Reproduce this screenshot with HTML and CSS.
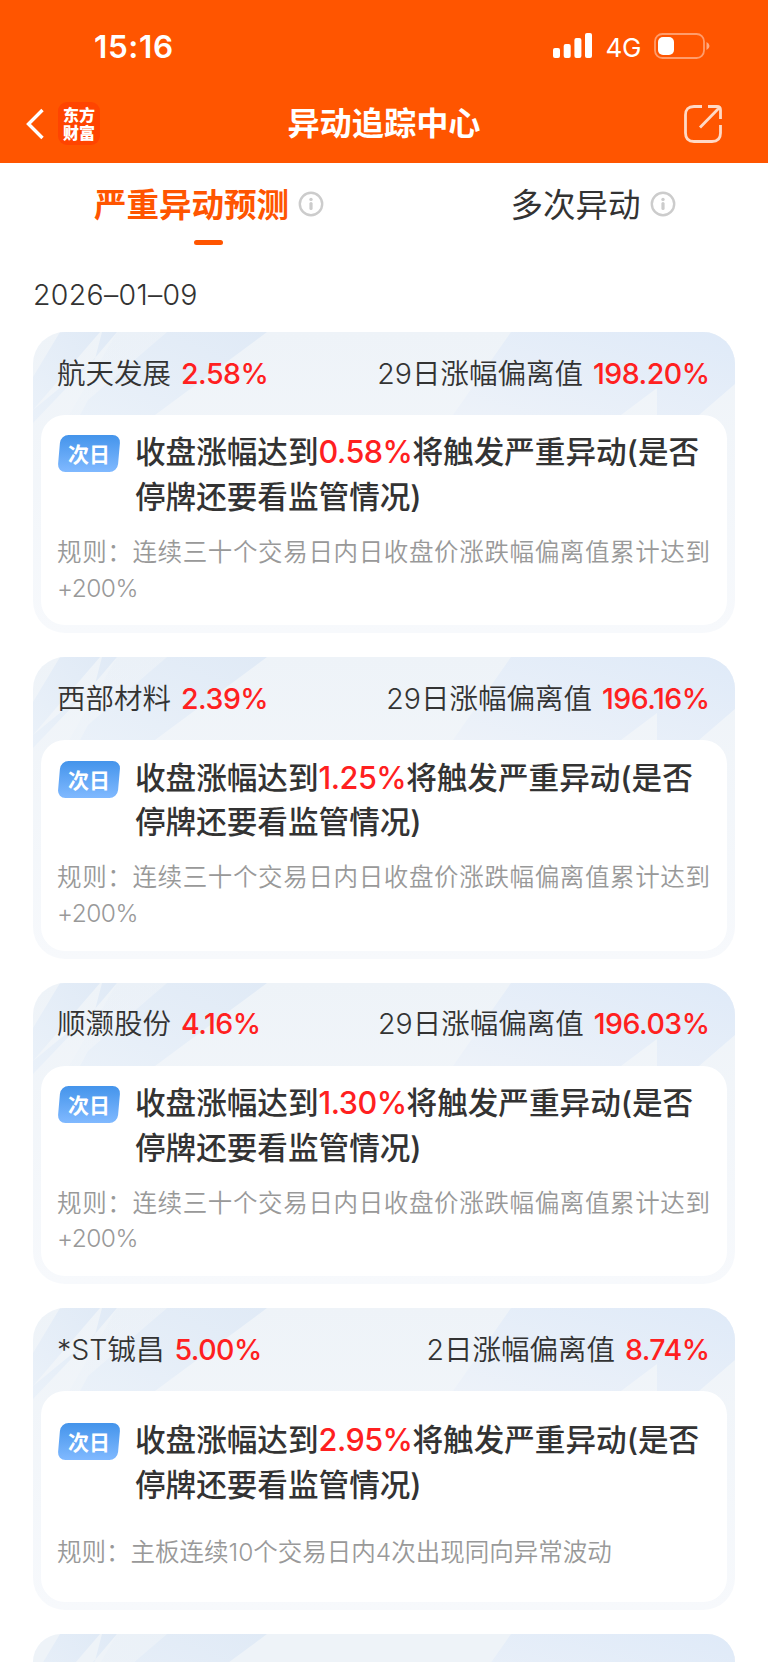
FILE: index.html
```html
<!DOCTYPE html>
<html lang="zh-CN">
<head>
<meta charset="utf-8">
<title>异动追踪中心</title>
<link rel="stylesheet" href="styles.css">
</head>
<body>
<svg class="defs" width="0" height="0" aria-hidden="true">
  <defs>
    <linearGradient id="ray" x1="1" y1="0" x2="0" y2="1"><stop offset="0" stop-color="#e0eaf6"/><stop offset="1" stop-color="#eaf1f9"/></linearGradient>
    <linearGradient id="rayRight" x1="1" y1="0" x2="0" y2="1"><stop offset="0" stop-color="#dfeaf8"/><stop offset="1" stop-color="#edf2f9"/></linearGradient>
    <symbol id="rays" viewBox="0 0 702 110">
      <path fill="url(#ray)" d="M27 0H67L0 78V45Z"/>
      <path fill="url(#ray)" d="M69 0H84L61 27L0 91V78L62 27Z"/>
      <path fill="url(#ray)" d="M84 0H134L47 83H36Z" opacity=".25"/>
      <path fill="url(#ray)" d="M134 0H234L122 83H47L55 68Z"/>
      <path fill="url(#rayRight)" d="M478 0H702V52L666 83H624V56L588 83H420Z"/>
    </symbol>
    <symbol id="info" viewBox="0 0 26 26">
      <circle cx="13" cy="13" r="11.2" fill="none" stroke="#ccc" stroke-width="2.4"/>
      <circle cx="13" cy="8.4" r="1.7" fill="#ccc"/>
      <path d="M13 12.5V17.5" stroke="#ccc" stroke-width="3.2" stroke-linecap="round"/>
    </symbol>
  </defs>
</svg>
<header class="top">
  <div class="status">
    <span class="time">15:16</span>
    <div class="signals">
      <svg width="40" height="26" viewBox="0 0 40 26" fill="#fff"><rect x="0" y="15" width="7" height="10" rx="2"/><rect x="10.7" y="11" width="7" height="14" rx="2"/><rect x="21.4" y="5" width="7" height="20" rx="2"/><rect x="32" y="0" width="7" height="25" rx="2"/></svg>
      <span class="net">4G</span>
      <svg width="56" height="26" viewBox="0 0 56 26"><rect x="1" y="1" width="49" height="24" rx="7.5" fill="none" stroke="#fff" stroke-opacity=".42" stroke-width="1.8"/><rect x="4" y="4" width="16" height="18" rx="5" fill="#fff"/><path d="M52.5 9V17Q55.5 15.5 55.5 13T52.5 9Z" fill="#fff" fill-opacity=".5"/></svg>
    </div>
  </div>
  <nav class="nav">
    <div class="nav-left">
      <svg width="18" height="32" viewBox="0 0 18 32"><path d="M16.5 2L2.5 16L16.5 30" fill="none" stroke="#fff" stroke-width="3.4"/></svg>
      <span class="logo">东方<br>财富</span>
    </div>
    <h1 class="title">异动追踪中心</h1>
    <svg class="share" width="40" height="40" viewBox="0 0 40 40" fill="none" stroke="#ffd9c5" stroke-width="2.8"><path d="M19 2.5H11Q2.5 2.5 2.5 11V29Q2.5 37.5 11 37.5H29Q37.5 37.5 37.5 29V21M25 2.5H34Q37.5 2.5 37.5 6V15M36.5 3.5L17 23.5"/></svg>
  </nav>
</header>
<div class="tabs">
  <div class="tab active"><span class="tab-label">严重异动预测</span><svg class="info"><use href="#info"/></svg></div>
  <div class="tab"><span class="tab-label">多次异动</span><svg class="info"><use href="#info"/></svg></div>
</div>
<main class="list">
  <p class="date">2026–01–09</p>
  <article class="card">
    <svg class="rays"><use href="#rays"/></svg>
    <div class="head"><span>航天发展 <b class="num">2.58%</b></span><span>29日涨幅偏离值 <b class="num">198.20%</b></span></div>
    <div class="body">
      <div class="msg"><span class="tag"><i>次日</i></span><p class="text">收盘涨幅达到<b class="num">0.58%</b>将触发严重异动(是否停牌还要看监管情况)</p></div>
      <p class="rule">规则：连续三十个交易日内日收盘价涨跌幅偏离值累计达到<span class="limit">+200%</span></p>
    </div>
  </article>
  <article class="card">
    <svg class="rays"><use href="#rays"/></svg>
    <div class="head"><span>西部材料 <b class="num">2.39%</b></span><span>29日涨幅偏离值 <b class="num">196.16%</b></span></div>
    <div class="body">
      <div class="msg"><span class="tag"><i>次日</i></span><p class="text">收盘涨幅达到<b class="num">1.25%</b>将触发严重异动(是否停牌还要看监管情况)</p></div>
      <p class="rule">规则：连续三十个交易日内日收盘价涨跌幅偏离值累计达到<span class="limit">+200%</span></p>
    </div>
  </article>
  <article class="card">
    <svg class="rays"><use href="#rays"/></svg>
    <div class="head"><span>顺灏股份 <b class="num">4.16%</b></span><span>29日涨幅偏离值 <b class="num">196.03%</b></span></div>
    <div class="body">
      <div class="msg"><span class="tag"><i>次日</i></span><p class="text">收盘涨幅达到<b class="num">1.30%</b>将触发严重异动(是否停牌还要看监管情况)</p></div>
      <p class="rule">规则：连续三十个交易日内日收盘价涨跌幅偏离值累计达到<span class="limit">+200%</span></p>
    </div>
  </article>
  <article class="card">
    <svg class="rays"><use href="#rays"/></svg>
    <div class="head"><span>*ST铖昌 <b class="num">5.00%</b></span><span>2日涨幅偏离值 <b class="num">8.74%</b></span></div>
    <div class="body">
      <div class="msg"><span class="tag"><i>次日</i></span><p class="text">收盘涨幅达到<b class="num">2.95%</b>将触发严重异动(是否停牌还要看监管情况)</p></div>
      <p class="rule">规则：主板连续10个交易日内4次出现同向异常波动</p>
    </div>
  </article>
  <article class="card next">
    <svg class="rays"><use href="#rays"/></svg>
  </article>
</main>
</body>
</html>
```

FILE: styles.css
```css
* { box-sizing: border-box; margin: 0; padding: 0; }
html, body { height: 1662px; overflow: hidden; }
body { background: #fff; color: #333; font-family: Inter, "Noto Sans CJK SC", sans-serif; display: flex; flex-direction: column; }
.defs { position: absolute; }
.top { flex: none; height: 163px; background: #ff5500; color: #fff; }
.status { height: 92px; padding: 0 58px 0 94px; display: flex; justify-content: space-between; align-items: center; }
.time { font-size: 31.5px; font-weight: 600; letter-spacing: 0.6px; }
.signals { display: flex; align-items: center; }
.net { font-size: 26px; margin: 3px 13px 0 13px; letter-spacing: -0.4px; }
.nav { height: 63px; padding: 0 45px 0 26px; display: flex; align-items: center; justify-content: space-between; position: relative; }
.nav-left { display: flex; align-items: center; gap: 14px; }
.logo { width: 42px; height: 43px; border-radius: 9px; background: #ff4400; font: 900 16px/18px "Noto Sans CJK SC", sans-serif; text-align: center; padding-top: 3px; }
.title { position: absolute; left: 0; right: 0; text-align: center; font-size: 32.2px; line-height: 48px; font-weight: 600; pointer-events: none; }
.tabs { flex: none; height: 92px; display: grid; grid-template-columns: 418px 350px; }
.tab { display: flex; justify-content: center; align-items: center; gap: 9px; height: 82px; font-size: 32.5px; position: relative; }
.tab-label { padding-bottom: 3px; }
.tab.active { color: #ff5500; font-weight: 600; }
.tab.active::after { content: ""; position: absolute; left: 194px; top: 77px; width: 29px; height: 5px; border-radius: 2.5px; background: #ff5500; }
.info { width: 26px; height: 26px; }
.list { flex: 1; min-height: 0; overflow: hidden; padding: 0 33px; }
.date { height: 77px; line-height: 80px; font-size: 28.5px; font-weight: 350; letter-spacing: 0.3px; }
.card { position: relative; height: 301.4px; margin-bottom: 24px; padding: 0 8px 8px; border-radius: 32px; overflow: hidden; background: linear-gradient(#eef3f8, #f7f9fc); display: flex; flex-direction: column; }
.card.next { height: 28px; margin: 0; padding: 0; border-radius: 32px 32px 0 0; background: #eef3f8; }
.rays { position: absolute; left: 0; top: 0; width: 702px; height: 110px; }
.head { position: relative; height: 83px; padding: 0 17.5px 5px 16px; display: flex; justify-content: space-between; align-items: center; font-size: 28.5px; font-weight: 350; white-space: nowrap; }
.num { color: #ff2020; font-weight: 500; letter-spacing: -0.5px; }
.head .num { margin-left: 2px; font-weight: 450; }
.body { position: relative; flex: 1; border-radius: 24px; background: #fff; padding: 0 17px 4px 16px; display: flex; flex-direction: column; justify-content: space-evenly; }
.msg { display: flex; }
.tag { flex: none; width: 60px; height: 37px; margin: 5px 16px 0 2px; border-radius: 8px; background: linear-gradient(#4494eb, #80b9ff); transform: skewX(-5deg); color: #fff; display: flex; align-items: center; justify-content: center; }
.tag i { font: 700 21px/37px "Noto Sans CJK SC", sans-serif; transform: skewX(5deg); }
.text { font-size: 30.6px; line-height: 44.7px; font-weight: 500; }
.rule { font-size: 24.5px; line-height: 35.5px; font-weight: 350; color: #999; text-align: justify; }
.limit { letter-spacing: -0.5px; }
```
